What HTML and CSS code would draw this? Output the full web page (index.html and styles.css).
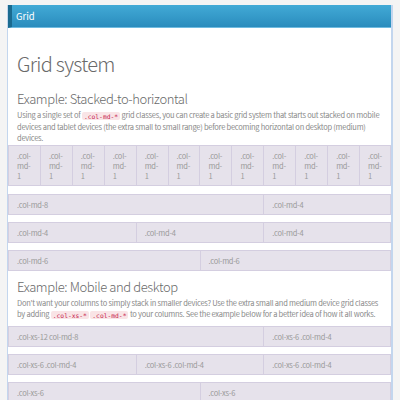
FILE: index.html
```html
<!DOCTYPE html>
<html>
<head>
<meta charset="utf-8">
<link rel="stylesheet" href="styles.css">
</head>
<body>
<div class="panel">
  <div class="panel-head">Grid</div>
  <div class="panel-body">
    <h1 class="title">Grid system</h1>
    <h2 class="subtitle">Example: Stacked-to-horizontal</h2>
    <p class="lead">Using a single set of <code>.col-md-*</code> grid classes, you can create a basic grid system that starts out stacked on mobile devices and tablet devices (the extra small to small range) before becoming horizontal on desktop (medium) devices.</p>
    <div class="row row-12 first">
      <div class="cell">.col-md-1</div><div class="cell">.col-md-1</div><div class="cell">.col-md-1</div><div class="cell">.col-md-1</div><div class="cell">.col-md-1</div><div class="cell">.col-md-1</div><div class="cell">.col-md-1</div><div class="cell">.col-md-1</div><div class="cell">.col-md-1</div><div class="cell">.col-md-1</div><div class="cell">.col-md-1</div><div class="cell">.col-md-1</div>
    </div>
    <div class="row row-84">
      <div class="cell">.col-md-8</div><div class="cell">.col-md-4</div>
    </div>
    <div class="row row-444">
      <div class="cell">.col-md-4</div><div class="cell">.col-md-4</div><div class="cell">.col-md-4</div>
    </div>
    <div class="row row-66">
      <div class="cell">.col-md-6</div><div class="cell">.col-md-6</div>
    </div>
    <h2 class="subtitle second">Example: Mobile and desktop</h2>
    <p class="lead second">Don't want your columns to simply stack in smaller devices? Use the extra small and medium device grid classes by adding <code>.col-xs-*</code> <code>.col-md-*</code> to your columns. See the example below for a better idea of how it all works.</p>
    <div class="row row-84">
      <div class="cell">.col-xs-12 col-md-8</div><div class="cell">.col-xs-6 .col-md-4</div>
    </div>
    <div class="row row-444">
      <div class="cell">.col-xs-6 .col-md-4</div><div class="cell">.col-xs-6 .col-md-4</div><div class="cell">.col-xs-6 .col-md-4</div>
    </div>
    <div class="row row-66">
      <div class="cell">.col-xs-6</div><div class="cell">.col-xs-6</div>
    </div>
  </div>
</div>
</body>
</html>
```
FILE: styles.css
```css
html, body {
  margin: 0;
  padding: 0;
  background: #f4f4f4;
}
body {
  padding: 5px 7px 0 7px;
  font-family: "Noto Sans CJK KR", "Noto Sans", sans-serif;
  color: #777;
  overflow: hidden;
  height: 400px;
  box-sizing: border-box;
}
.panel {
  background: #fff;
  border-left: 1px solid #c3d6ee;
  border-right: 2px solid #c3d6ee;
  height: 100%;
}
.panel-head {
  height: 22px;
  border-bottom: 1px solid #6fbbe0;
  border-left: 4px solid #1a6a8f;
  background: linear-gradient(#42aad6, #2a8cbd);
  color: #fff;
  font-size: 9.5px;
  line-height: 22px;
  padding-left: 4px;
}
.panel-body {
  padding: 0 9px;
}
.title {
  margin: 23px 0 0;
  font-size: 20px;
  font-weight: 300;
  letter-spacing: -0.7px;
  line-height: 26px;
  color: #6a6a6a;
}
.subtitle {
  margin: 14px 0 0;
  font-size: 13px;
  font-weight: 300;
  letter-spacing: -0.4px;
  line-height: 16px;
  color: #6a6a6a;
}
.subtitle.second {
  margin-top: 8px;
}
.lead {
  margin: 2px 0 2px;
  font-size: 7.5px;
  letter-spacing: -0.25px;
  line-height: 11px;
  color: #8a8a8a;
}
.lead.second {
  margin: 2px 0 6px;
}
code {
  font-family: "DejaVu Sans Mono", monospace;
  font-size: 6.3px;
  letter-spacing: 0;
  color: #c7254e;
  background: #f9e4e6;
  padding: 0.5px 2px;
  border-radius: 2px;
}
.row {
  display: grid;
  margin: 0 -9px 7px;
}
.row.first {
  margin-bottom: 8px;
}
.row-12 { grid-template-columns: repeat(12, minmax(0, 1fr)); }
.row-84 { grid-template-columns: minmax(0, 8fr) minmax(0, 4fr); }
.row-444 { grid-template-columns: repeat(3, minmax(0, 1fr)); }
.row-66 { grid-template-columns: repeat(2, minmax(0, 1fr)); }
.cell {
  background: #e6e2eb;
  border: 1px solid #d4cee0;
  margin-right: -1px;
  padding: 4.5px 6px 4.5px 8px;
  font-size: 7.5px;
  letter-spacing: -0.25px;
  line-height: 10px;
  color: #9a9a9a;
  overflow-wrap: break-word;
}
.cell:last-child {
  margin-right: 0;
}
```
